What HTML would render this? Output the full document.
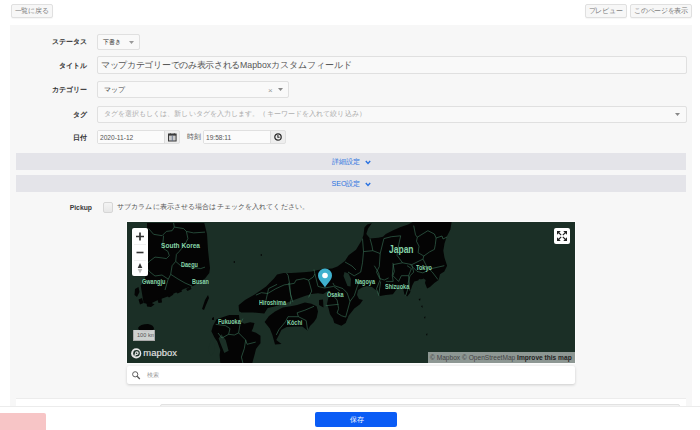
<!DOCTYPE html>
<html><head><meta charset="utf-8">
<style>
*{box-sizing:border-box;margin:0;padding:0}
html,body{width:700px;height:430px;overflow:hidden;background:#fff;font-family:"Liberation Sans",sans-serif;color:#333}
.a{position:absolute}
.t{position:absolute;white-space:nowrap;line-height:10px}
.btn{position:absolute;border:1px solid #e0e0e0;border-radius:2px;background:#f7f7f7;color:#777;font-size:6.5px;line-height:11.5px;letter-spacing:-0.3px;box-shadow:0 1px 1px rgba(0,0,0,.04);text-align:center;white-space:nowrap}
.panel{position:absolute;left:10px;top:25px;width:682px;height:382px;background:#f7f7f7}
.lbl{position:absolute;right:613.5px;font-size:7px;font-weight:bold;color:#333;white-space:nowrap;line-height:10px}
.inp{position:absolute;border:1px solid #e0e0e0;border-radius:2px;background:#f9f9f9;white-space:nowrap;overflow:hidden}
.mlbl{position:absolute;font-weight:bold;color:#86d4a8;white-space:nowrap;line-height:1;transform:scaleX(.85);transform-origin:0 0}
.bar{position:absolute;left:16px;width:670px;height:17px;background:#e4e4e9}
.bar span{position:absolute;left:315.5px;top:3.5px;color:#2a72e0;font-size:7.1px;line-height:10px;white-space:nowrap}
.bar svg{position:absolute;left:349px;top:7px}
</style></head><body>
<div class="btn" style="left:10.5px;top:3.5px;width:42px;height:14px">一覧に戻る</div>
<div class="btn" style="left:584.5px;top:3.5px;width:42px;height:14px">プレビュー</div>
<div class="btn" style="left:630px;top:3.5px;width:62px;height:14px">このページを表示</div>

<div class="panel"></div>

<div class="lbl" style="top:37px">ステータス</div>
<div class="inp" style="left:97px;top:34px;width:43px;height:16px"></div>
<div class="t" style="left:102.5px;top:37.1px;font-size:6.3px;color:#333">下書き</div>
<svg class="a" style="left:129px;top:40.5px" width="5" height="3" viewBox="0 0 5 3"><path d="M0,0 H5 L2.5,3 Z" fill="#999"/></svg>

<div class="lbl" style="top:61px">タイトル</div>
<div class="inp" style="left:97px;top:56px;width:590px;height:18px"></div>
<div class="t" style="left:101px;top:59.8px;font-size:8.75px;color:#555"><span style="letter-spacing:-0.31px">マップカテゴリーでのみ表示される</span>Mapboxカスタムフィールド</div>

<div class="lbl" style="top:85px">カテゴリー</div>
<div class="inp" style="left:97px;top:81px;width:192px;height:17px"></div>
<div class="t" style="left:103.5px;top:84.5px;font-size:7px;color:#444">マップ</div>
<div class="t" style="left:268px;top:85.5px;font-size:8px;color:#999">×</div>
<svg class="a" style="left:278px;top:88px" width="5" height="3" viewBox="0 0 5 3"><path d="M0,0 H5 L2.5,3 Z" fill="#888"/></svg>

<div class="lbl" style="top:109.5px">タグ</div>
<div class="inp" style="left:97px;top:106px;width:590px;height:17px"></div>
<div class="t" style="left:103.5px;top:109.3px;font-size:7px;color:#aaa;letter-spacing:0.09px">タグを選択もしくは、新しいタグを入力します。（キーワードを入れて絞り込み）</div>
<svg class="a" style="left:675px;top:113px" width="5" height="3" viewBox="0 0 5 3"><path d="M0,0 H5 L2.5,3 Z" fill="#888"/></svg>

<div class="lbl" style="top:132.5px">日付</div>
<div class="inp" style="left:97px;top:130px;width:83px;height:14px;background:#eee"></div>
<div class="a" style="left:98px;top:131px;width:66.5px;height:12px;background:#fbfbfb;border-right:1px solid #dcdcdc"></div>
<div class="t" style="left:100px;top:133px;font-size:6.6px;color:#555">2020-11-12</div>
<svg class="a" style="left:168px;top:133px" width="9" height="9" viewBox="0 0 9 9"><rect x="0.5" y="1" width="7.6" height="7" fill="#c9c9c9" stroke="#3a3a3a" stroke-width="1"/><rect x="0.5" y="1" width="7.6" height="1.6" fill="#3a3a3a"/><path d="M4.3,2.5 V8" stroke="#5a6a8a" stroke-width="0.8"/><path d="M2.3,0 V1.4 M6.3,0 V1.4" stroke="#3a3a3a" stroke-width="0.7"/></svg>
<div class="t" style="left:187px;top:132.3px;font-size:7px;color:#555">時刻</div>
<div class="inp" style="left:203px;top:130px;width:83px;height:14px;background:#eee"></div>
<div class="a" style="left:204px;top:131px;width:66.5px;height:12px;background:#fbfbfb;border-right:1px solid #dcdcdc"></div>
<div class="t" style="left:206px;top:133px;font-size:6.6px;color:#555">19:58:11</div>
<svg class="a" style="left:273.5px;top:133.2px" width="8" height="8" viewBox="0 0 8 8"><circle cx="4" cy="4" r="3.2" fill="none" stroke="#2a2a2a" stroke-width="1.25"/><path d="M3.9,2 V4.3 H5.6" fill="none" stroke="#2a2a2a" stroke-width="1.1"/></svg>

<div class="bar" style="top:153px"><span>詳細設定</span><svg width="6" height="5" viewBox="0 0 6 5"><path d="M0.8,1 L3,3.4 L5.2,1" fill="none" stroke="#2a72e0" stroke-width="1.4"/></svg></div>
<div class="bar" style="top:175px"><span style="left:315.5px">SEO設定</span><svg width="6" height="5" viewBox="0 0 6 5"><path d="M0.8,1 L3,3.4 L5.2,1" fill="none" stroke="#2a72e0" stroke-width="1.4"/></svg></div>

<div class="lbl" style="top:203px;right:608px;font-size:6.8px;color:#3a3a3a">Pickup</div>
<div class="a" style="left:103px;top:202px;width:10px;height:11px;border:1px solid #d6d6d6;border-radius:2px;background:linear-gradient(#f4f4f4,#e7e7e7)"></div>
<div class="a" style="left:117px;top:202.4px;font-size:6.5px;letter-spacing:0.11px;line-height:10px;color:#555;white-space:nowrap">サブカラムに表示させる場合はチェックを入れてください。</div>

<div class="a" style="left:127px;top:222px;width:448px;height:141px;overflow:hidden;background:#1b2f26;box-shadow:0 0 0 1px rgba(255,255,255,.6)">
<svg width="448" height="141" viewBox="127 222 448 141" style="position:absolute;left:0;top:0">
<g fill="#040404" stroke="none">
<path d="M147,223 L204.3,223 L207,234 L208,250 L209.3,262 L210,268 L209.3,273 L205,278.6 L193.6,285.7 L185,288.6 L175,292.9 L166.4,297 L157.9,300 L149.3,304.3 L143.6,302.9 L140.7,285.7 L145,278 L147,270 Z"/>
<path d="M138,328 Q140,324 148,324 Q154,325 154,329 Q152,332 146,332 Q139,332 138,328 Z"/>
<path d="M208,295 L209,298 L206,305 L204,310 L202,309 L205,300 Z"/>
<path d="M238.6,305.3 L245,300 L255.1,294.3 L266.1,286.4 L274,278.6 L277.1,274.6 L283.4,273.1 L291.3,273.1 L303.9,272.3 L311.7,271.5 L318,269.9 L324.3,269.1 L332.1,268.4 L337.4,266.5 L344.9,260.9 L348.6,255.3 L356,249.8 L361.6,240.5 L363.5,234.9 L364.4,227.4 L367.2,224.6 L371.8,223.3 L368.1,228.4 L366.3,233.9 L370,238.6 L378.4,237.7 L383,236.7 L385.8,233.9 L393.2,230.2 L400.7,227.1 L408.1,224.6 L412.8,222 L451.6,222 L450.4,229.4 L446.8,236.5 L444.5,243.6 L443.3,250.7 L444.5,257.7 L447.1,265.7 L444.3,271.4 L440,274.3 L438.6,280 L434.3,282.9 L430,287.1 L427.1,288.6 L425,282.9 L425.7,280 L423.6,278.6 L420,280 L414.3,281.4 L412.1,285.7 L410,292.9 L407.1,296.4 L404.3,294.3 L402.9,287.1 L397.1,288.6 L392.9,294.3 L385.7,295 L380,296 L377,291 L372,287 L367,286 L362,287.5 L358,290 L357,295 L359,299 L362.9,300 L360,304.3 L354.3,308.6 L348.6,315.7 L345.7,322.9 L341.4,325.7 L334.3,322.9 L332.9,318.6 L330,314.3 L328.6,308.6 L327,304 L328.6,297 L328.6,290.6 L323.2,294 L318,293.3 L311.4,294 L304.9,295.9 L294.5,299.8 L284.1,303.7 L278,305.6 L273.4,306.7 L267.7,307.9 L264.3,313.6 L252.9,312.4 L241.4,312.4 L239.1,311.3 Z"/>
<path d="M212.9,326 L216.6,319.3 L229.2,314.9 L238.9,314.9 L239.6,320.8 L244.1,323.8 L250.1,322.3 L254.5,323.1 L253,328.3 L251.5,331.3 L256,332.7 L260.5,335.7 L260.5,343.2 L258.2,346.1 L256,349.1 L254.5,355.1 L252.3,363 L220.3,363 L219.6,355.1 L220.3,350 L217.3,341.7 L214.3,337.2 L211.4,331.3 Z"/>
<path d="M135,289 L138.5,287 L139.5,292 L137,297 L134.5,295 Z M138.5,299.5 L142,298 L143.5,303 L140,304.5 Z M146.5,303 L150,302 L154.5,304.5 L151,307 L147,306.5 Z M157.5,299.5 L161.5,298 L162,302.5 L158.5,303 Z M166.5,295.5 L171,292.5 L173.5,294.5 L169,297.5 Z M176,292 L181,289 L182,291.5 L177.5,293.5 Z M186,289 L190.5,286.5 L191.5,289 L187.5,291 Z M212,318 L214,317 L214,320 L212,320 Z"/>
<path d="M260,255 L262,254 L262,256 Z M233,262 L235,261 L235,263 Z M418.5,299 L420.5,298.5 L420,301 Z M421,306 L422.5,305.5 L422.5,308 Z M424,317 L425.5,316.5 L425,319 Z M426,334 L427.5,333.5 L427,336 Z"/>
<path d="M264.6,321.9 L269,316 L275,311.5 L282.8,307.6 L290.6,306.3 L297.1,305 L301,303.7 L304.9,302.4 L311.4,303.7 L316.6,306.3 L318,311.5 L316.6,318 L314,321.9 L310,326 L307.5,330.4 L302.3,326.5 L294.5,326.5 L286.7,327.1 L281.5,329.7 L278.9,335 L276.3,340.1 L281.5,344 L275,344.5 L272.4,334.9 L269.8,328.4 Z M319,300 L323,299.5 L323.5,307.6 L319,305 Z"/>
</g>
<path d="M344.5,272 L348.5,273.5 L351,279 L350.5,286.5 L347.5,286 L345.5,281 L343.5,276 Z M419,279 L424,280 L425,284 L421.5,288 L418,290 L416.5,285 Z" fill="#1b2f26"/>
<path d="M221.4,334.3 L225.7,340 L228.6,350.7 L224.3,352.9 L221.4,345.7 L218.6,338.6 Z M211,340 L215,344 L214,352 L211,356 L208,350 Z" fill="#1b2f26"/>
<g fill="none" stroke="#3b7459" stroke-width="0.6" stroke-linejoin="round">
<polyline points="148.6,228.6 153.6,234.3 162.1,235.7 166.4,231.4 172.1,230.7 174.3,227.1 173.6,222.9"/>
<polyline points="174.3,227.1 183.6,228.6 186.4,231.4 193.6,232.9 205,232.1"/>
<polyline points="163.6,235.7 162.9,242.9 163.6,248.6 167.9,251.4 169.3,255.7 166.4,258.6 162.1,257.9 155,257.1 149.3,261.4"/>
<polyline points="186.4,231.4 187.9,238.6 185,244.3 179.3,251.4 176.4,254.3 175.7,261.4 172.1,265.7 170.7,274.3 167.9,280 165,290"/>
<polyline points="175.7,261.4 180.7,265.7 190.7,267.1 200.7,268.6 205,267.1"/>
<polyline points="149.3,261.4 145,266 150,272 155,276 162,275 168,279"/>
<polyline points="170.7,274.3 178,279 185,283 192,286"/>
<polyline points="362.5,238.6 363.5,251.6 362.5,262.8 360.7,272.1 354.2,275.8 348,272"/>
<polyline points="363.5,251.6 372.8,250.7 380.2,253.5 379.3,266.5 376.5,272.1 380.2,279.5 376.5,288.8 378.4,294.4"/>
<polyline points="380.2,253.5 383.9,238.6 391.4,236.7 400.7,235.8"/>
<polyline points="400.7,235.8 398.8,244.2 397,255.3 402.5,262.8 411.8,264.6 413.7,272.1 410,275.8 408.1,283.2 410,290.7"/>
<polyline points="402.5,262.8 393.2,264.6 392.3,275.8 393.2,281.4 385.8,281.4"/>
<polyline points="411.8,264.6 423,259.1 426.7,266.5 432.3,272.1 437.9,279.5"/>
<polyline points="417.3,237.2 427.9,230.7 434.4,234 436.1,238 435.3,244.6 434.4,249.4 429.6,251.9 423.8,256 418.1,252.7 419,246.2 416.5,241.3 417.3,237.2"/>
<polyline points="436.1,238 442,236 443,239 447,237"/>
<polyline points="413.7,225.6 415.5,234.9 417.3,237.2"/>
<polyline points="423.8,256 423,259.1"/>
<polyline points="255.9,295.1 261.4,292.7 267.7,293.5 275.6,288.8 284.2,284.9 289.7,284.1 288.1,275.4 286.6,273.1"/>
<polyline points="289.7,284.1 294.4,283.3 296,280.1 303.9,278.6 308.6,280.1 313.3,277 314.9,273.9 314,269.5"/>
<polyline points="289.7,284.1 290.5,294.3 292.9,302.1"/>
<polyline points="308.6,280.1 311.7,291.1 308.6,297.4"/>
<polyline points="314.9,273.9 318,286.4 324.3,288 333.7,286.4 340,291.1"/>
<polyline points="265.7,301.4 268.6,288.6 277.1,284.3"/>
<polyline points="215.7,324.3 225.7,325.7 230,328.6 228.6,334.3 234.3,335 238.6,332.9 245.7,340 247.1,344.3 255.7,342.1"/>
<polyline points="238.6,332.9 240,324.3 242.9,318.6"/>
<polyline points="245.7,340 244.3,348.6 241.4,357.1 242.9,363"/>
<polyline points="228.6,334.3 222,338 218,333"/>
<polyline points="297.1,312.8 304.9,310.2 314,306.3"/>
<polyline points="297.1,312.8 298.4,316.7 306.2,320.6 307.5,329.7"/>
<polyline points="298.4,316.7 288,316.7 285.4,321.9 278.9,329.7 276.3,334.9"/>
<polyline points="331.4,293.6 337.1,300 338.6,308.6 337.1,312.9 341.4,315.7 345.7,317.1 350,301.4 347.1,292.9 342.9,288.6 334.3,285.7 332.9,282.9"/>
<polyline points="325.7,305.7 338.6,304.3"/>
<polyline points="350,301.4 354.3,295.7 357.1,287.1 360,280"/>
<polyline points="374.3,265.7 378.6,272.9 380,278.6 384.3,280 388.6,277.9"/>
<polyline points="380.7,281.4 378.6,295.7"/>
<polyline points="392.9,262.9 394.3,271.4 392.9,275.7 398.6,281.4 401.4,275.7 408.6,275.7 411.4,268.6 407.1,265.7"/>
<polyline points="408.6,275.7 409.3,284.3 405.7,295.7"/>
<polyline points="410,264.3 417.1,271.4 422.9,272.9 431.4,268.6 444.3,265.7"/>
<polyline points="288.6,282.9 291.4,298.6 290,304.3"/>
<polyline points="345,262 352,266 356,270"/>
<polyline points="370,238.6 372,246 372.8,250.7"/>
</g>
</svg>
</div>
<div class="mlbl" style="left:161.4px;top:241.8px;font-size:8px;transform:scaleX(.82)">South Korea</div>
<div class="mlbl" style="left:180.7px;top:262.0px;font-size:6.5px">Daegu</div>
<div class="mlbl" style="left:141.7px;top:279.1px;font-size:6.5px">Gwangju</div>
<div class="mlbl" style="left:191.9px;top:279.1px;font-size:6.5px">Busan</div>
<div class="mlbl" style="left:388.6px;top:245.1px;font-size:10px">Japan</div>
<div class="mlbl" style="left:416px;top:265.3px;font-size:6.5px">Tokyo</div>
<div class="mlbl" style="left:355.1px;top:278.6px;font-size:6.5px">Nagoya</div>
<div class="mlbl" style="left:384.9px;top:283.6px;font-size:6.5px">Shizuoka</div>
<div class="mlbl" style="left:327.1px;top:292.1px;font-size:6.5px">Ōsaka</div>
<div class="mlbl" style="left:258.8px;top:299.6px;font-size:6.5px">Hiroshima</div>
<div class="mlbl" style="left:217.9px;top:319.4px;font-size:6.5px">Fukuoka</div>
<div class="mlbl" style="left:286.9px;top:320.2px;font-size:6.5px">Kōchi</div>
<div class="a" style="left:132px;top:228px;width:16px;height:47.5px;background:#fff;border-radius:2px;box-shadow:0 0 0 1px rgba(0,0,0,.1)">
<svg width="16" height="48" viewBox="0 0 16 48" style="position:absolute;left:0;top:0">
<path d="M8,4.5 V12.5 M4,8.5 H12" stroke="#333" stroke-width="1.7"/>
<path d="M2,16.5 H14 M2,32.5 H14" stroke="#e6e6e6" stroke-width="0.6"/>
<path d="M4.5,24.5 H11.5" stroke="#333" stroke-width="1.6"/>
<path d="M8,35 L10.3,40 H5.7 Z" fill="#333"/>
<path d="M8,45.5 L10.3,41 H5.7 Z" fill="#bbb"/>
</svg></div>
<div class="a" style="left:554px;top:228px;width:16px;height:16px;background:#fff;border-radius:2px">
<svg width="16" height="16" viewBox="0 0 16 16" style="position:absolute;left:0;top:0">
<path d="M3,3 H6.8 L3,6.8 Z M13,3 H9.2 L13,6.8 Z M3,13 H6.8 L3,9.2 Z M13,13 H9.2 L13,9.2 Z" fill="#222"/>
<path d="M4.5,4.5 L7.2,7.2 M11.5,4.5 L8.8,7.2 M4.5,11.5 L7.2,8.8 M11.5,11.5 L8.8,8.8" stroke="#222" stroke-width="1.1"/>
</svg></div>
<div class="a" style="left:316px;top:268px;width:18px;height:20px">
<svg width="18" height="20" viewBox="0 0 18 20" style="position:absolute;left:0;top:0">
<path d="M9,19.7 C7.5,16 2,12.5 2,7.5 A7,7 0 0 1 16,7.5 C16,12.5 10.5,16 9,19.7 Z" fill="#3fb1ce"/>
<circle cx="9" cy="7.5" r="2.8" fill="#fff"/>
</svg></div>
<div class="a" style="left:133px;top:329.7px;width:21.5px;height:11px;background:rgba(255,255,255,.78);border:1px solid #aaa;border-top:none;font-size:5.6px;line-height:10px;color:#555;padding-left:3px;white-space:nowrap;overflow:hidden">100 km</div>
<div class="a" style="left:131px;top:347.5px;width:50px;height:12px">
<svg width="12" height="12" viewBox="0 0 12 12" style="position:absolute;left:0;top:0">
<circle cx="5.2" cy="5.4" r="5.1" fill="#e6e6e6"/>
<circle cx="5.5" cy="5.2" r="3.3" fill="#1b2f26"/>
<path d="M3.2,8.6 L3.9,5.2 A1.9,1.9 0 1 1 5.6,7.1 Z" fill="#e6e6e6"/>
<path d="M4.9,4.2 L6.6,5.2 L4.9,6.2 Z" fill="#1b2f26"/>
</svg>
<div class="a" style="left:12.3px;top:0.5px;font-size:9.4px;line-height:10px;color:#e2e2e2;letter-spacing:0.05px;-webkit-text-stroke:0.15px #e2e2e2">mapbox</div></div>
<div class="a" style="left:428px;top:352px;width:147px;height:11px;background:rgba(255,255,255,.5);font-size:6.6px;line-height:11px;color:#444;white-space:nowrap;padding-left:2px;overflow:hidden">© Mapbox © OpenStreetMap <b style="color:#222">Improve this map</b></div>
<div class="a" style="left:127px;top:366px;width:448px;height:18px;background:#fff;border-radius:2px;box-shadow:0 1px 3px rgba(0,0,0,.18)"></div>
<div class="a" style="left:147px;top:370px;font-size:6px;line-height:10px;color:#9a9a9a">検索</div>

<svg class="a" style="left:131px;top:370px" width="10" height="10" viewBox="0 0 10 10"><circle cx="4.2" cy="4.3" r="2.6" fill="none" stroke="#555" stroke-width="0.95"/><path d="M6.1,6.3 L8.8,9" stroke="#555" stroke-width="1.3"/></svg>
<div class="a" style="left:16px;top:397.5px;width:670px;height:20px;background:#fff;border-top:1px solid #ececec"></div>
<div class="a" style="left:160px;top:404px;width:520px;height:10px;background:#f3f3f3;border:1px solid #e2e2e2;border-radius:2px"></div>
<div class="a" style="left:0;top:406px;width:700px;height:24px;background:#fff;border-top:1px solid #ececec"></div>
<div class="a" style="left:-3px;top:413px;width:49px;height:20px;background:#f7c5c6;border-radius:2px"></div>
<div class="a" style="left:315px;top:412px;width:82px;height:14.5px;background:#0a5cf5;border-radius:2px"></div>
<div class="t" style="left:349.5px;top:414.5px;font-size:6.5px;color:#fff">保存</div>
</body></html>
